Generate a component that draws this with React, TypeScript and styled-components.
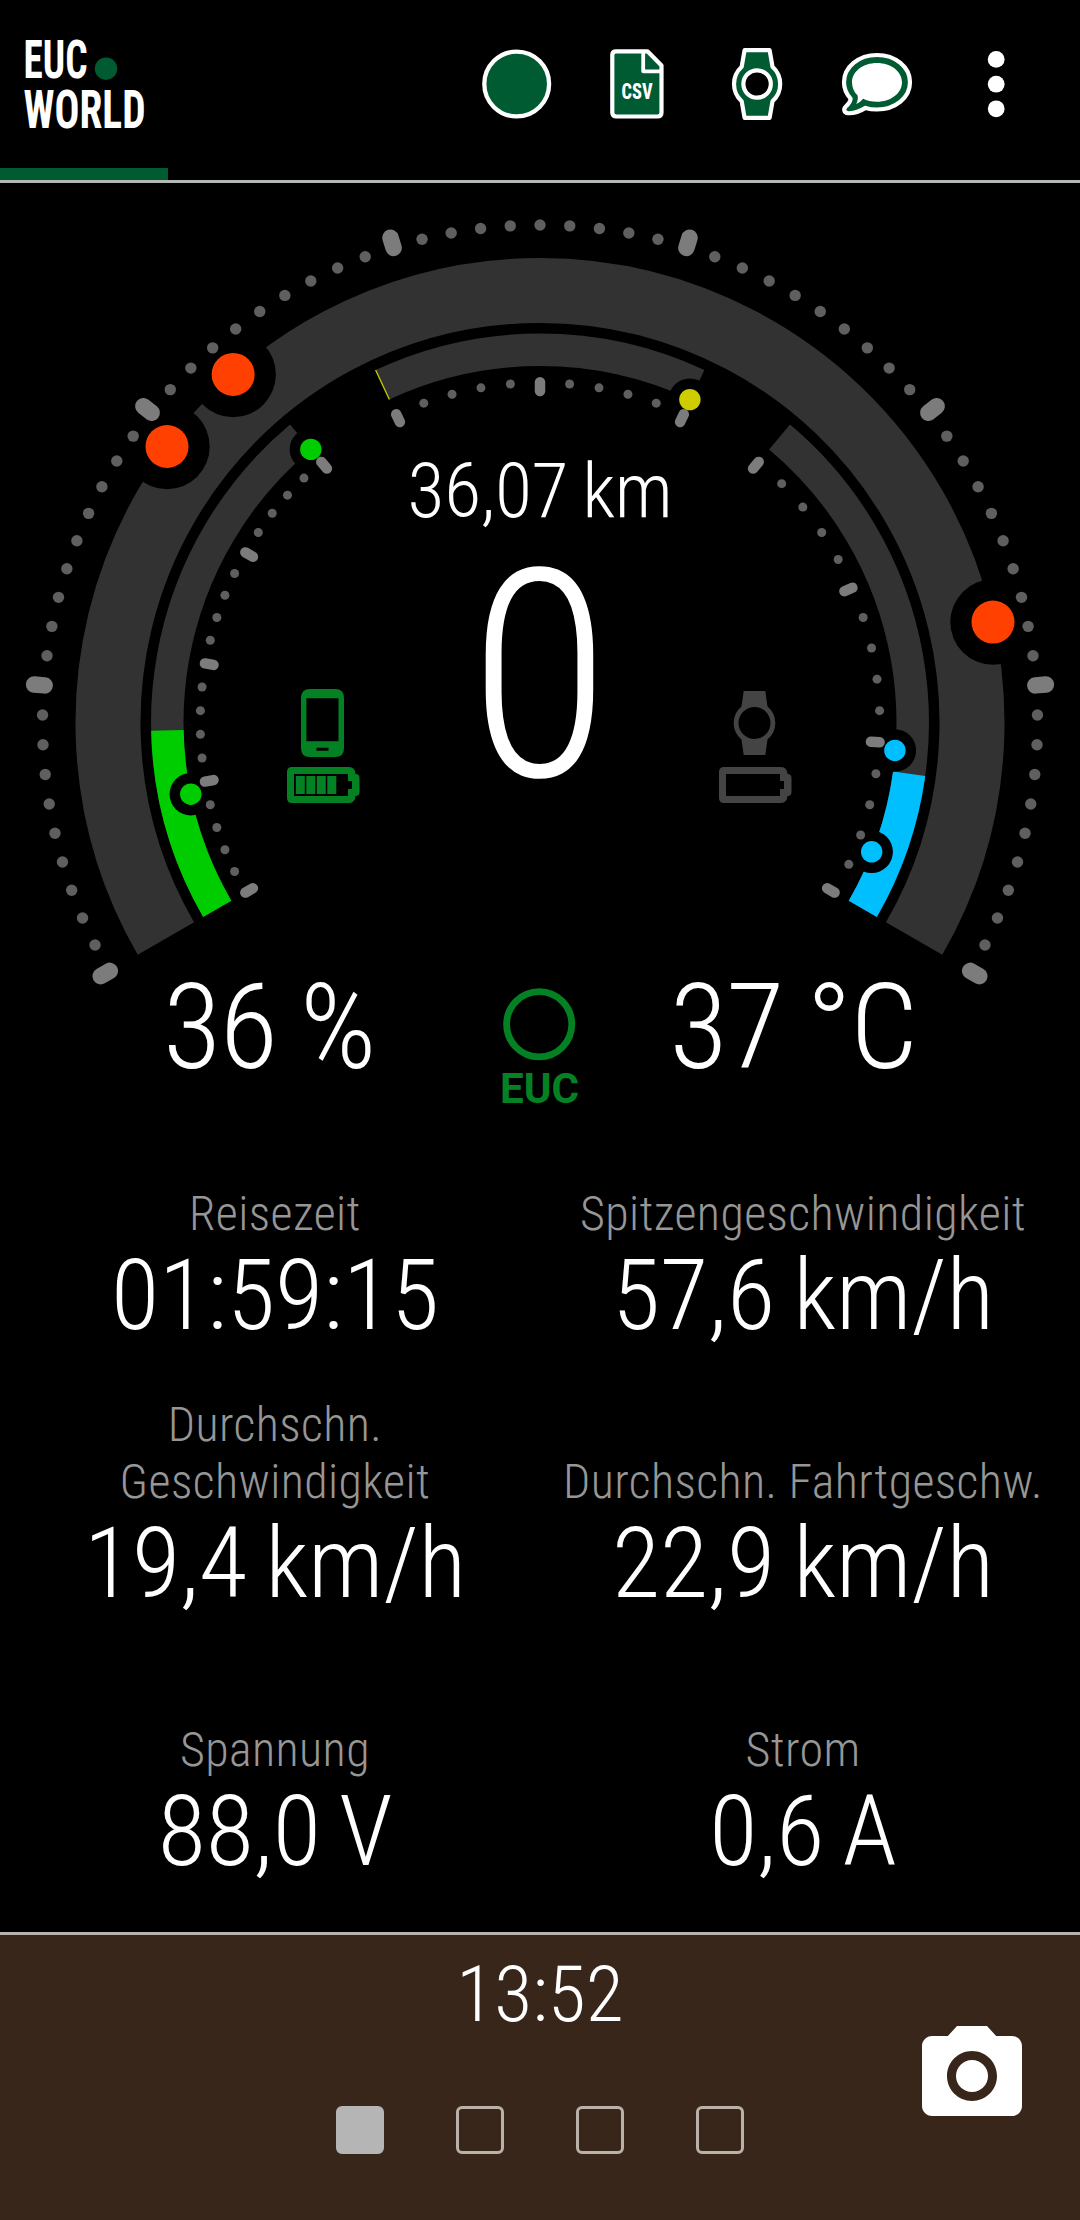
import React from 'react';
import styled, { createGlobalStyle } from 'styled-components';

const GlobalStyle = createGlobalStyle`
  * { box-sizing: border-box; }
  body { margin: 0; background: #000; }
`;

const BRAND = '#005a32';
const STATUS_ON = '#048223';
const STATUS_OFF = '#444444';

const Screen = styled.div`
  width: 1080px;
  height: 2220px;
  display: flex;
  flex-direction: column;
  background: #000;
  color: #fff;
  font-family: 'Roboto Condensed', Roboto, 'Liberation Sans', sans-serif;
  font-weight: 300;
  overflow: hidden;
`;

const Header = styled.header`
  height: 183px;
  flex: none;
  display: flex;
  flex-direction: column;
  border-bottom: 3px solid #b4b8b4;
`;

const HeaderRow = styled.div`
  height: 168px;
  display: flex;
  align-items: center;
  justify-content: space-between;
  padding-right: 24px;
`;

const Progress = styled.div`
  width: 168px;
  height: 12px;
  background: ${BRAND};
`;

const Actions = styled.nav`
  display: flex;
`;

const Action = styled.button`
  width: 120px;
  height: 168px;
  padding: 0;
  border: 0;
  background: none;
  display: block;
`;

const Gauge = styled.section`
  height: 967px;
  flex: none;
  display: grid;

  & > * {
    grid-area: 1 / 1;
  }
`;

const Readout = styled.div`
  display: flex;
  flex-direction: column;
  align-items: center;
  padding-top: 265px;
`;

const Text = styled.div<{ $size: number; $line: number; $spacing?: number; $word?: number }>`
  font-size: ${(p) => p.$size}px;
  line-height: ${(p) => p.$line}px;
  letter-spacing: ${(p) => p.$spacing ?? 0}px;
  word-spacing: ${(p) => p.$word ?? 0}px;
  white-space: nowrap;
  text-align: center;
`;

const SpeedRow = styled.div`
  display: grid;
  grid-template-columns: 72px 360px 72px;
  align-items: end;
  margin-right: 1px;
`;

const Status = styled.div`
  display: flex;
  flex-direction: column;
  align-items: center;
  gap: 10px;
  padding-bottom: 17px;

  svg {
    display: block;
  }
`;

const DeviceIcon = styled.svg`
  margin-right: 3px;
`;

const BottomRow = styled.div`
  width: 1080px;
  margin-top: 137px;
  display: grid;
  grid-template-columns: 460px 160px 460px;
  align-items: start;
`;

const BottomValue = styled(Text)<{ $shift: number }>`
  padding-left: ${(p) => Math.max(p.$shift, 0)}px;
  padding-right: ${(p) => Math.max(-p.$shift, 0)}px;
`;

const Stats = styled.section`
  flex: 1;
  display: grid;
  grid-template-columns: 528px 528px;
  grid-template-rows: 198px 268px 268px;
  padding: 0 13px 0 11px;
`;

const Stat = styled.div`
  display: flex;
  flex-direction: column;
  align-items: center;
  justify-content: flex-end;
`;

const Label = styled.div`
  max-width: 500px;
  font-size: 48px;
  line-height: 57px;
  letter-spacing: 0.4px;
  color: #969696;
  text-align: center;
`;

const Footer = styled.footer`
  height: 288px;
  flex: none;
  display: grid;
  grid-template-columns: 1fr 288px 1fr;
  border-top: 3px solid #b7b3ac;
  background: #38261a;
`;

const FooterCenter = styled.div`
  grid-column: 2;
  display: flex;
  flex-direction: column;
  align-items: center;
  padding-top: 15px;
`;

const Pages = styled.div`
  display: flex;
  gap: 72px;
  margin-top: 66px;
`;

const Page = styled.span<{ $active?: boolean }>`
  width: 48px;
  height: 48px;
  border-radius: 6px;
  border: 3px solid ${(p) => (p.$active ? '#b5b5b5' : '#bab1aa')};
  background: ${(p) => (p.$active ? '#b5b5b5' : 'transparent')};
`;

const CameraButton = styled.button`
  justify-self: end;
  align-self: start;
  margin: 81px 48px 0 0;
  padding: 0;
  border: 0;
  background: none;

  svg {
    display: block;
  }
`;

const CX = 540;
const CY = 539.5;

/* Angles are in degrees, 0 at the right and growing counter-clockwise. */
const at = (r: number, deg: number): [number, number] => {
  const a = (deg * Math.PI) / 180;
  return [CX + r * Math.cos(a), CY - r * Math.sin(a)];
};

const arcPath = (r: number, from: number, to: number) => {
  const [x1, y1] = at(r, from);
  const [x2, y2] = at(r, to);
  const large = Math.abs(from - to) > 180 ? 1 : 0;
  return `M${x1} ${y1}A${r} ${r} 0 ${large} ${from > to ? 1 : 0} ${x2} ${y2}`;
};

type ScaleProps = {
  from: number;
  to: number;
  count: number;
  every: number;
  dotR: number;
  dotSize: number;
  majorFrom: number;
  majorTo: number;
  majorWidth: number;
};

function Scale(p: ScaleProps) {
  return (
    <g>
      {Array.from({ length: p.count + 1 }, (_, i) => {
        const deg = p.from + ((p.to - p.from) * i) / p.count;
        if (i % p.every === 0) {
          const [x1, y1] = at(p.majorFrom, deg);
          const [x2, y2] = at(p.majorTo, deg);
          return (
            <line key={i} x1={x1} y1={y1} x2={x2} y2={y2} stroke="#7c7c7c" strokeWidth={p.majorWidth} strokeLinecap="round" />
          );
        }
        const [x, y] = at(p.dotR, deg);
        return <circle key={i} cx={x} cy={y} r={p.dotSize / 2} fill="#5f5f5f" />;
      })}
    </g>
  );
}

const INNER = { dotR: 339.8, dotSize: 9, majorFrom: 331.5, majorTo: 340.2, majorWidth: 10.5 };

const markers = [
  { r: 464, deg: 143.5, size: 21.5, halo: 42.7, color: '#ff4000' },
  { r: 464, deg: 131.4, size: 21.5, halo: 42.7, color: '#ff4000' },
  { r: 464, deg: 12.5, size: 21.5, halo: 42.7, color: '#ff4000' },
  { r: 356.5, deg: 191.6, size: 10.7, halo: 21.2, color: '#00cd00' },
  { r: 356.5, deg: 130, size: 10.7, halo: 21.2, color: '#00cd00' },
  { r: 356, deg: 65.1, size: 10.7, halo: 21.2, color: '#cdcd00' },
  { r: 356, deg: -4.5, size: 10.7, halo: 21.2, color: '#00bfff' },
  { r: 356, deg: -21.3, size: 10.7, halo: 21.2, color: '#00bfff' },
];

function Dial() {
  return (
    <svg width="1080" height="967" viewBox="0 0 1080 967" fill="none">
      <path d={arcPath(432, 210, -30)} stroke="#323232" strokeWidth="65" />
      <path d={arcPath(372.7, 210, 130)} stroke="#323232" strokeWidth="32.5" />
      <path d={arcPath(372.7, 210, 181.2)} stroke="#00cd00" strokeWidth="32.5" />
      <path d={arcPath(372.7, 115, 65)} stroke="#323232" strokeWidth="32.5" />
      <path d={arcPath(372.7, 115.1, 114.9)} stroke="#cdcd00" strokeWidth="32.5" />
      <path d={arcPath(372.7, 50, -30)} stroke="#323232" strokeWidth="32.5" />
      <path d={arcPath(372.7, -7.9, -30)} stroke="#00bfff" strokeWidth="32.5" />
      {markers.map((m, i) => {
        const [x, y] = at(m.r, m.deg);
        return <circle key={i} cx={x} cy={y} r={m.halo} fill="#000" />;
      })}
      <Scale from={210} to={-30} count={70} every={10} dotR={497.5} dotSize={11.4} majorFrom={496.7} majorTo={507.3} majorWidth={16.5} />
      <Scale from={210} to={130} count={20} every={5} {...INNER} />
      <Scale from={115} to={65} count={10} every={5} {...INNER} />
      <Scale from={50} to={-30} count={15} every={5} {...INNER} />
      {markers.map((m, i) => {
        const [x, y] = at(m.r, m.deg);
        return <circle key={i} cx={x} cy={y} r={m.size} fill={m.color} />;
      })}
    </svg>
  );
}

function Logo() {
  return (
    <svg width="168" height="168" viewBox="0 0 168 168" fontFamily="'Roboto Condensed', Roboto, sans-serif" fontWeight="700" fontSize="54.5" fill="#fff">
      <text x="23.5" y="78" textLength="64" lengthAdjust="spacingAndGlyphs">EUC</text>
      <text x="23.5" y="128.4" textLength="122" lengthAdjust="spacingAndGlyphs">WORLD</text>
      <circle cx="106" cy="68.7" r="11.2" fill={BRAND} />
    </svg>
  );
}

function Battery({ color, bars }: { color: string; bars: number }) {
  return (
    <svg width="73" height="36" viewBox="0 0 73 36" fill={color}>
      <path
        fillRule="evenodd"
        d="M5 0H62Q68 0 68.5 7Q72.5 7 72.5 11V25Q72.5 29 68.5 29Q68 36 62 36H5Q0 36 0 31V5Q0 0 5 0ZM7 7V29H61V22H65V14H61V7Z"
      />
      {Array.from({ length: bars }, (_, i) => (
        <rect key={i} x={8.8 + i * 10.5} y="9" width="9" height="18" />
      ))}
    </svg>
  );
}

export default function App() {
  return (
    <>
      <GlobalStyle />
      <Screen>
        <Header>
          <HeaderRow>
            <Logo />
            <Actions>
              <Action>
                <svg width="120" height="168" viewBox="456 0 120 168">
                  <circle cx="516.7" cy="84" r="32.4" fill={BRAND} stroke="#fff" strokeWidth="4.3" />
                </svg>
              </Action>
              <Action>
                <svg width="120" height="168" viewBox="576 0 120 168" fill={BRAND} stroke="#fff" strokeWidth="4.2" strokeLinejoin="round">
                  <path d="M616 51.3H647.5L661.5 65.5V112.5Q661.5 116.5 657.5 116.5H616.5Q612.3 116.5 612.3 112.5V55Q612.3 51.3 616 51.3Z" />
                  <path d="M643.2 51.5V71.3H661.5" fill="none" strokeWidth="3.8" />
                  <text x="621.5" y="98.9" fontFamily="'Roboto Condensed', Roboto, sans-serif" fontWeight="800" fontSize="21.8" textLength="31" lengthAdjust="spacingAndGlyphs" fill="#fff" stroke="none">CSV</text>
                </svg>
              </Action>
              <Action>
                <svg width="120" height="168" viewBox="696 0 120 168" fill={BRAND} stroke="#fff" strokeWidth="4.2" strokeLinejoin="round">
                  <path d="M744.6 50.1H769.6L772.5 66.7A23.3 23.3 0 0 1 772.5 101.3L769.6 117.9H744.6L741.7 101.3A23.3 23.3 0 0 1 741.7 66.7Z" />
                  <circle cx="757.1" cy="84" r="13.7" fill="#000" />
                </svg>
              </Action>
              <Action>
                <svg width="120" height="168" viewBox="816 0 120 168" fill={BRAND} stroke="#fff" strokeWidth="4.2" strokeLinejoin="round">
                  <path d="M877 55C895.5 55 910 67 910 82.3S895.5 109.5 877 109.5C873 109.5 869 109 865.5 107.9C859 112 853 113.5 848 113.2C844 112.8 843 109 846 106.3C849.5 103 850.5 100.5 850.6 98.6C846.3 94 844 88.5 844 82.3C844 67 858.5 55 877 55Z" />
                  <path d="M877 63C891 63 902 71.4 902 82.3S891 101.8 877 101.8C871.5 101.8 867 100.6 863 98.8C861.5 101 859 103 856.2 104C857.5 101.5 858.3 98 857.6 95.5C854 92 852 87.5 852 82.3C852 71.4 863 63 877 63Z" fill="#fff" stroke="none" />
                </svg>
              </Action>
              <Action>
                <svg width="120" height="168" viewBox="936 0 120 168" fill="#fff">
                  <circle cx="996.2" cy="59.4" r="8.4" />
                  <circle cx="996.2" cy="84.2" r="8.4" />
                  <circle cx="996.2" cy="108.8" r="8.4" />
                </svg>
              </Action>
            </Actions>
          </HeaderRow>
          <Progress />
        </Header>

        <Gauge>
          <Dial />
          <Readout>
            <Text $size={76} $line={86} $spacing={-0.4} $word={-2.5}>36,07 km</Text>
            <SpeedRow>
              <Status>
                <DeviceIcon width="43" height="68" viewBox="0 0 43 69" preserveAspectRatio="none" fill={STATUS_ON}>
                  <path fillRule="evenodd" d="M9 0H34Q43 0 43 9V60Q43 69 34 69H9Q0 69 0 60V9Q0 0 9 0ZM5.4 9.3V53H37.5V9.3ZM15.5 59.5V62.7H27.5V59.5Z" />
                </DeviceIcon>
                <Battery color={STATUS_ON} bars={4} />
              </Status>
              <Text $size={291} $line={286}>0</Text>
              <Status>
                <DeviceIcon width="43" height="68" viewBox="0 0 43 68" fill={STATUS_OFF}>
                  <path fillRule="evenodd" d="M10.7 2H32.3L34.5 17.5A21.3 21.3 0 0 1 34.5 50.5L32.3 66H10.7L8.5 50.5A21.3 21.3 0 0 1 8.5 17.5ZM21.5 18A16 16 0 1 0 21.5 50A16 16 0 1 0 21.5 18Z" />
                </DeviceIcon>
                <Battery color={STATUS_OFF} bars={0} />
              </Status>
            </SpeedRow>
            <BottomRow>
              <BottomValue $size={119.5} $line={140} $spacing={-1.4} $word={-2} $shift={78}>36 %</BottomValue>
              <svg width="160" height="160" viewBox="460 957 160 160" fill="none">
                <circle cx="539.2" cy="1024.3" r="32.6" stroke={STATUS_ON} strokeWidth="6.8" />
                <text x="500" y="1102.6" textLength="79" lengthAdjust="spacingAndGlyphs" fontFamily="Roboto, sans-serif" fontWeight="700" fontSize="43" fill={STATUS_ON}>EUC</text>
              </svg>
              <BottomValue $size={119.5} $line={140} $spacing={-1.4} $word={-2} $shift={-114}>37 °C</BottomValue>
            </BottomRow>
          </Readout>
        </Gauge>

        <Stats>
          {[
            ['Reisezeit', '01:59:15'],
            ['Spitzengeschwindigkeit', '57,6 km/h'],
            ['Durchschn. Geschwindigkeit', '19,4 km/h'],
            ['Durchschn. Fahrtgeschw.', '22,9 km/h'],
            ['Spannung', '88,0 V'],
            ['Strom', '0,6 A'],
          ].map(([label, value]) => (
            <Stat key={label}>
              <Label>{label}</Label>
              <Text $size={99} $line={106} $spacing={-0.1} $word={-4}>{value}</Text>
            </Stat>
          ))}
        </Stats>

        <Footer>
          <FooterCenter>
            <Text $size={78} $line={90}>13:52</Text>
            <Pages>
              <Page $active />
              <Page />
              <Page />
              <Page />
            </Pages>
          </FooterCenter>
          <CameraButton>
            <svg width="120" height="120" viewBox="0 0 24 24" fill="#fff">
              <circle cx="12" cy="12" r="3.2" />
              <path d="M9 2L7.17 4H4c-1.1 0-2 .9-2 2v12c0 1.1.9 2 2 2h16c1.1 0 2-.9 2-2V6c0-1.1-.9-2-2-2h-3.17L15 2H9zm3 15c-2.76 0-5-2.24-5-5s2.24-5 5-5 5 2.24 5 5-2.24 5-5 5z" />
            </svg>
          </CameraButton>
        </Footer>
      </Screen>
    </>
  );
}
